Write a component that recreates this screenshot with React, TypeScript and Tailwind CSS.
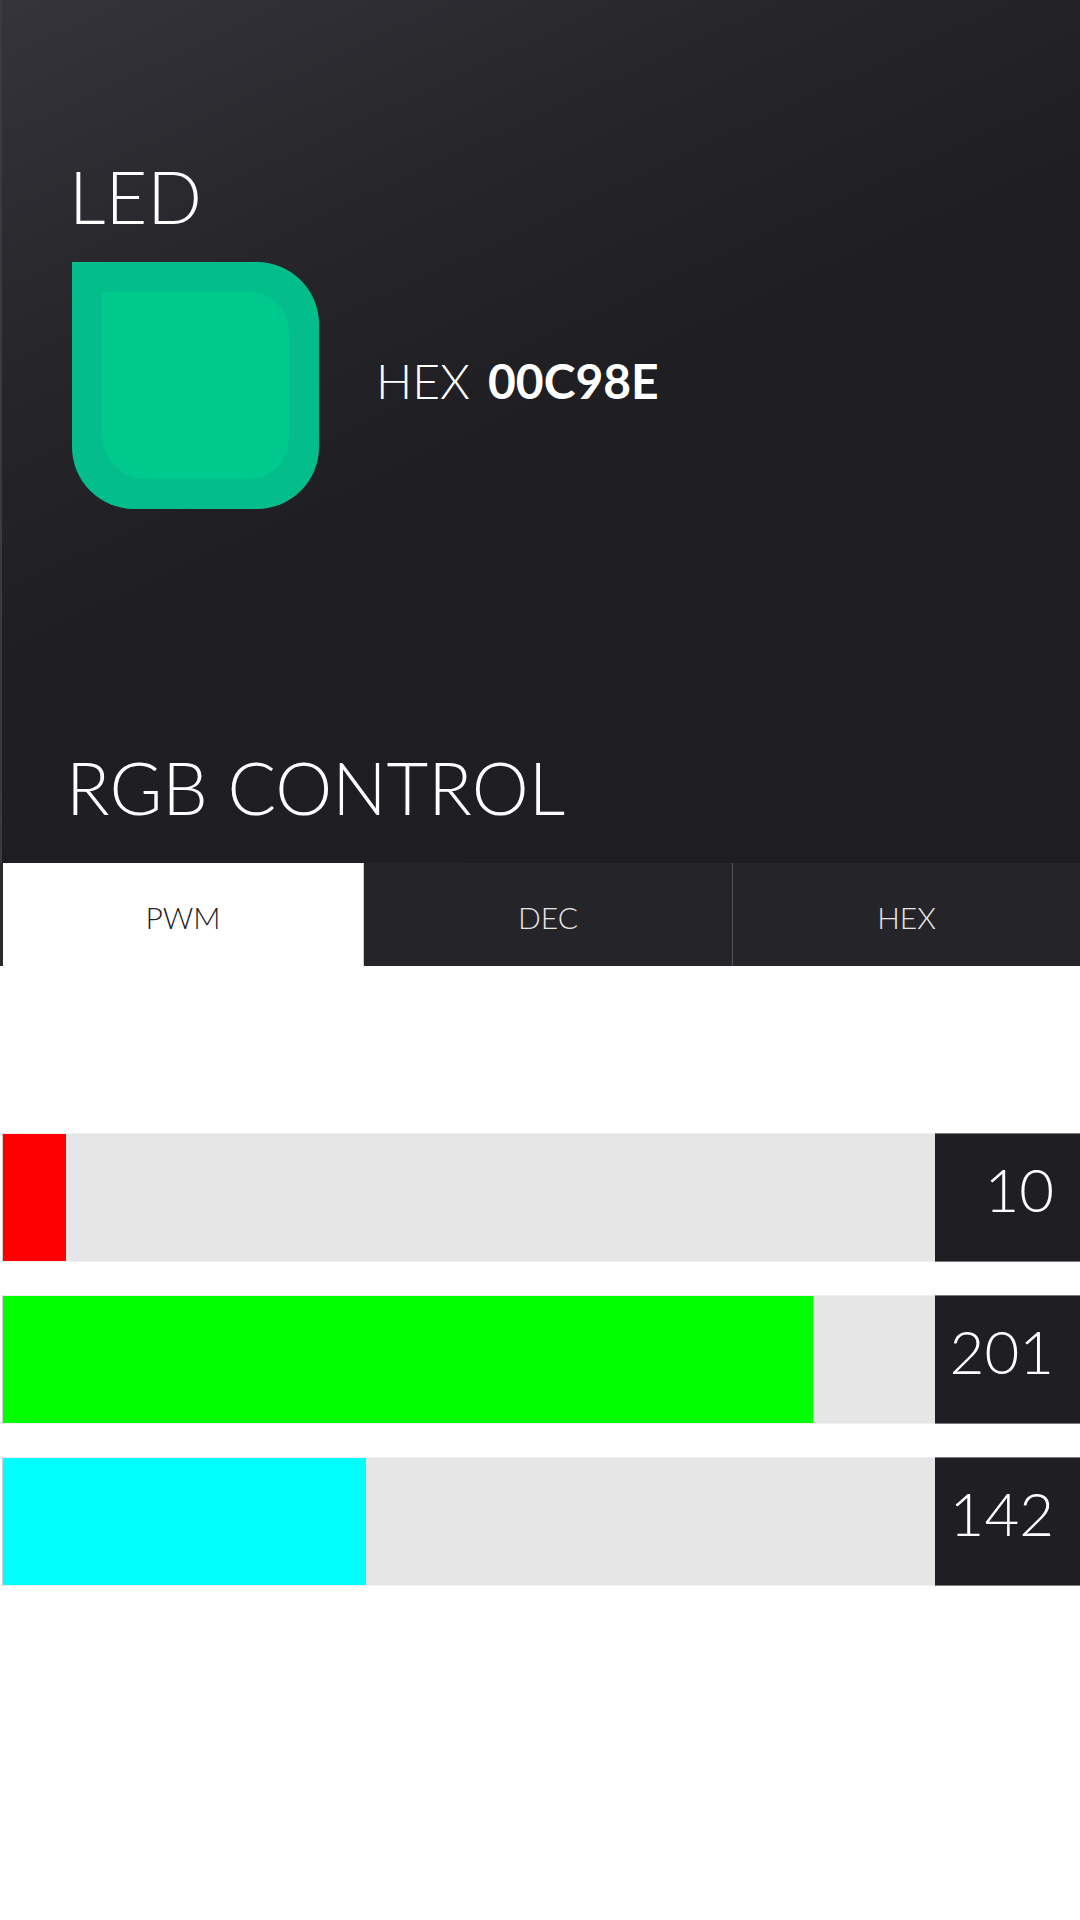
import React from 'react';

const channels = [
  { value: 10, fill: 63, color: 'bg-[#ff0000]' },
  { value: 201, fill: 810, color: 'bg-[#00ff00]' },
  { value: 142, fill: 363, color: 'bg-[#00ffff]' },
];

const tabs = [
  { label: 'PWM', width: 'w-[364px]', active: true },
  { label: 'DEC', width: 'w-[369px]', active: false },
  { label: 'HEX', width: 'flex-1', active: false },
];

export default function App() {
  return (
    <div className="min-h-[1920px] w-[1080px] bg-white font-['Lato',sans-serif]">
      {/* header */}
      <div className="h-[863px] border-l-2 border-[#3b3a40] bg-[linear-gradient(155deg,#35343a_0%,#26252a_28%,#1f1e23_48%,#1e1d22_100%)] pl-[70px] pt-[160px] text-white">
        <h1 className="-ml-[3px] text-[72px] font-light leading-none">LED</h1>
        <div className="mt-[30px] flex items-center">
          <div className="h-[247px] w-[247px] rounded-[0_62px_62px_62px] bg-[#03bd8a] p-[30px]">
            <div className="h-full w-full rounded-[2px_40px_40px_44px] bg-[#00c98e]" />
          </div>
          <div className="mb-[10px] ml-[57px] text-[48px] leading-none">
            <span className="font-light">HEX</span>
            <span className="ml-[18px] font-bold">00C98E</span>
          </div>
        </div>
        <h2 className="-ml-[6px] mt-[242px] text-[72px] font-light leading-none">RGB CONTROL</h2>
      </div>

      {/* tabs */}
      <div className="flex h-[103px]">
        {tabs.map((t, i) => (
          <div
            key={t.label}
            className={
              t.active
                ? `${t.width} flex items-center justify-center border-l-[3px] border-r border-l-[#2a2a2e] border-r-[#cfcfcf] bg-white pt-[6px] text-[30px] font-light text-[#222]`
                : `${t.width} flex items-center justify-center bg-[#252429] pt-[6px] text-[30px] font-light text-[#e6e6e6] ${i === 1 ? 'border-r border-[#55545a]' : ''}`
            }
          >
            {t.label}
          </div>
        ))}
      </div>

      {/* sliders */}
      <div className="mt-[167px] flex flex-col gap-[33px] pl-[2px]">
        {channels.map((c) => (
          <div key={c.value} className="flex h-[129px]">
            <div className="flex-1 border-y border-[#efefef] border-l border-l-[#d0d0d0] bg-[#e6e6e6]">
              <div className={`h-full ${c.color}`} style={{ width: c.fill }} />
            </div>
            <div className="flex w-[145px] items-center justify-end border-y border-[#7a7a7e] bg-[#1f1e23] pb-[18px] pr-[26px] text-[60px] font-light leading-none text-white">
              {c.value}
            </div>
          </div>
        ))}
      </div>
    </div>
  );
}
